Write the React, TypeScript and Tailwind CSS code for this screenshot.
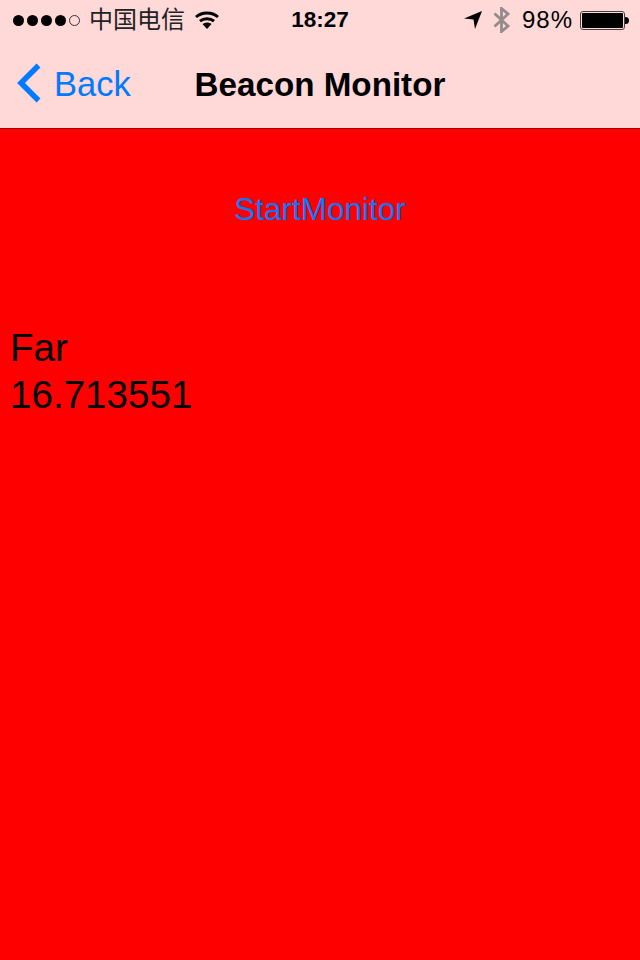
const sans = "font-['Liberation_Sans','Noto_Sans_CJK_SC',sans-serif]";

function Dots() {
  return (
    <div className="flex items-center gap-[3px]">
      <span className="w-[11px] h-[11px] rounded-full bg-black" />
      <span className="w-[11px] h-[11px] rounded-full bg-black" />
      <span className="w-[11px] h-[11px] rounded-full bg-black" />
      <span className="w-[11px] h-[11px] rounded-full bg-black" />
      <span className="w-[11px] h-[11px] rounded-full border border-[#333]" />
    </div>
  );
}

function Wifi() {
  return (
    <svg width="24" height="18" viewBox="0 0 24 18" className="block">
      <path d="M1 6 C7 0.7 17 0.7 23 6" fill="none" stroke="#000" strokeWidth="3" />
      <path d="M5 10.2 C9 6.8 15 6.8 19 10.2" fill="none" stroke="#000" strokeWidth="3" />
      <path d="M7.5 13 C10.3 11 13.7 11 16.5 13 L12 18 Z" fill="#000" />
    </svg>
  );
}

function Arrow() {
  return (
    <svg width="18" height="18" viewBox="0 0 18 18" className="block">
      <path d="M0 7.5 L18 0 L11 18 L9.5 8.5 Z" fill="#000" />
    </svg>
  );
}

function Bluetooth() {
  return (
    <svg width="17" height="26" viewBox="0 0 17 26" className="block">
      <path d="M1.5 6.5 L15 19 L8.5 24.5 L8.5 1.5 L15 7 L1.5 19.5" fill="none" stroke="#958b8b" strokeWidth="2.8" />
    </svg>
  );
}

function Battery() {
  return (
    <div className="flex items-center">
      <div className="w-[45px] h-[19px] rounded-[3px] border border-[#4a3f3f] p-[1px]">
        <div className="w-full h-full bg-black rounded-[1px]" />
      </div>
      <div className="w-[4px] h-[7px] bg-black rounded-r-sm" />
    </div>
  );
}

function Chevron() {
  return (
    <svg width="26" height="40" viewBox="0 0 26 40" className="block">
      <path d="M23.5 2.5 L6 20 L23.5 37.5" fill="none" stroke="#007aff" strokeWidth="5.5" />
    </svg>
  );
}

export default function App() {
  return (
    <div className={`${sans} w-[640px] h-[960px] flex flex-col bg-[#ff0000] overflow-hidden`}>
      <header className="h-[129px] shrink-0 bg-[#ffd8d8] border-b border-[#a80000] flex flex-col">
        <div className="relative h-[40px] flex items-center justify-between pl-[13px] pr-[11px] text-black">
          <div className="flex items-center">
            <Dots />
            <span className="ml-[9px] text-[24px] leading-none text-[#222]">中国电信</span>
            <div className="ml-[10px]"><Wifi /></div>
          </div>
          <span className="absolute left-0 right-0 pt-[1px] text-center text-[22.5px] font-bold leading-none">18:27</span>
          <div className="flex items-center">
            <Arrow />
            <div className="ml-[11px]"><Bluetooth /></div>
            <span className="ml-[12px] text-[24px] leading-none tracking-[1px]">98%</span>
            <div className="ml-[7px]"><Battery /></div>
          </div>
        </div>
        <nav className="relative flex-1 flex items-center pl-[15px] pb-[2px]">
          <Chevron />
          <span className="ml-[13px] mt-[2px] text-[34.5px] leading-none text-[#007aff]">Back</span>
          <span className="absolute left-0 right-0 text-center text-[33.2px] font-bold leading-none text-black pt-[3px]">Beacon Monitor</span>
        </nav>
      </header>
      <main className="flex-1 flex flex-col">
        <button className="mt-[61px] h-[38px] text-center text-[31.5px] leading-[38px] text-[#0a78ff]">StartMonitor</button>
        <div className="mt-[96px] pl-[10px] text-[38.6px] leading-[47px] text-black">
          <div>Far</div>
          <div>16.713551</div>
        </div>
      </main>
    </div>
  );
}
